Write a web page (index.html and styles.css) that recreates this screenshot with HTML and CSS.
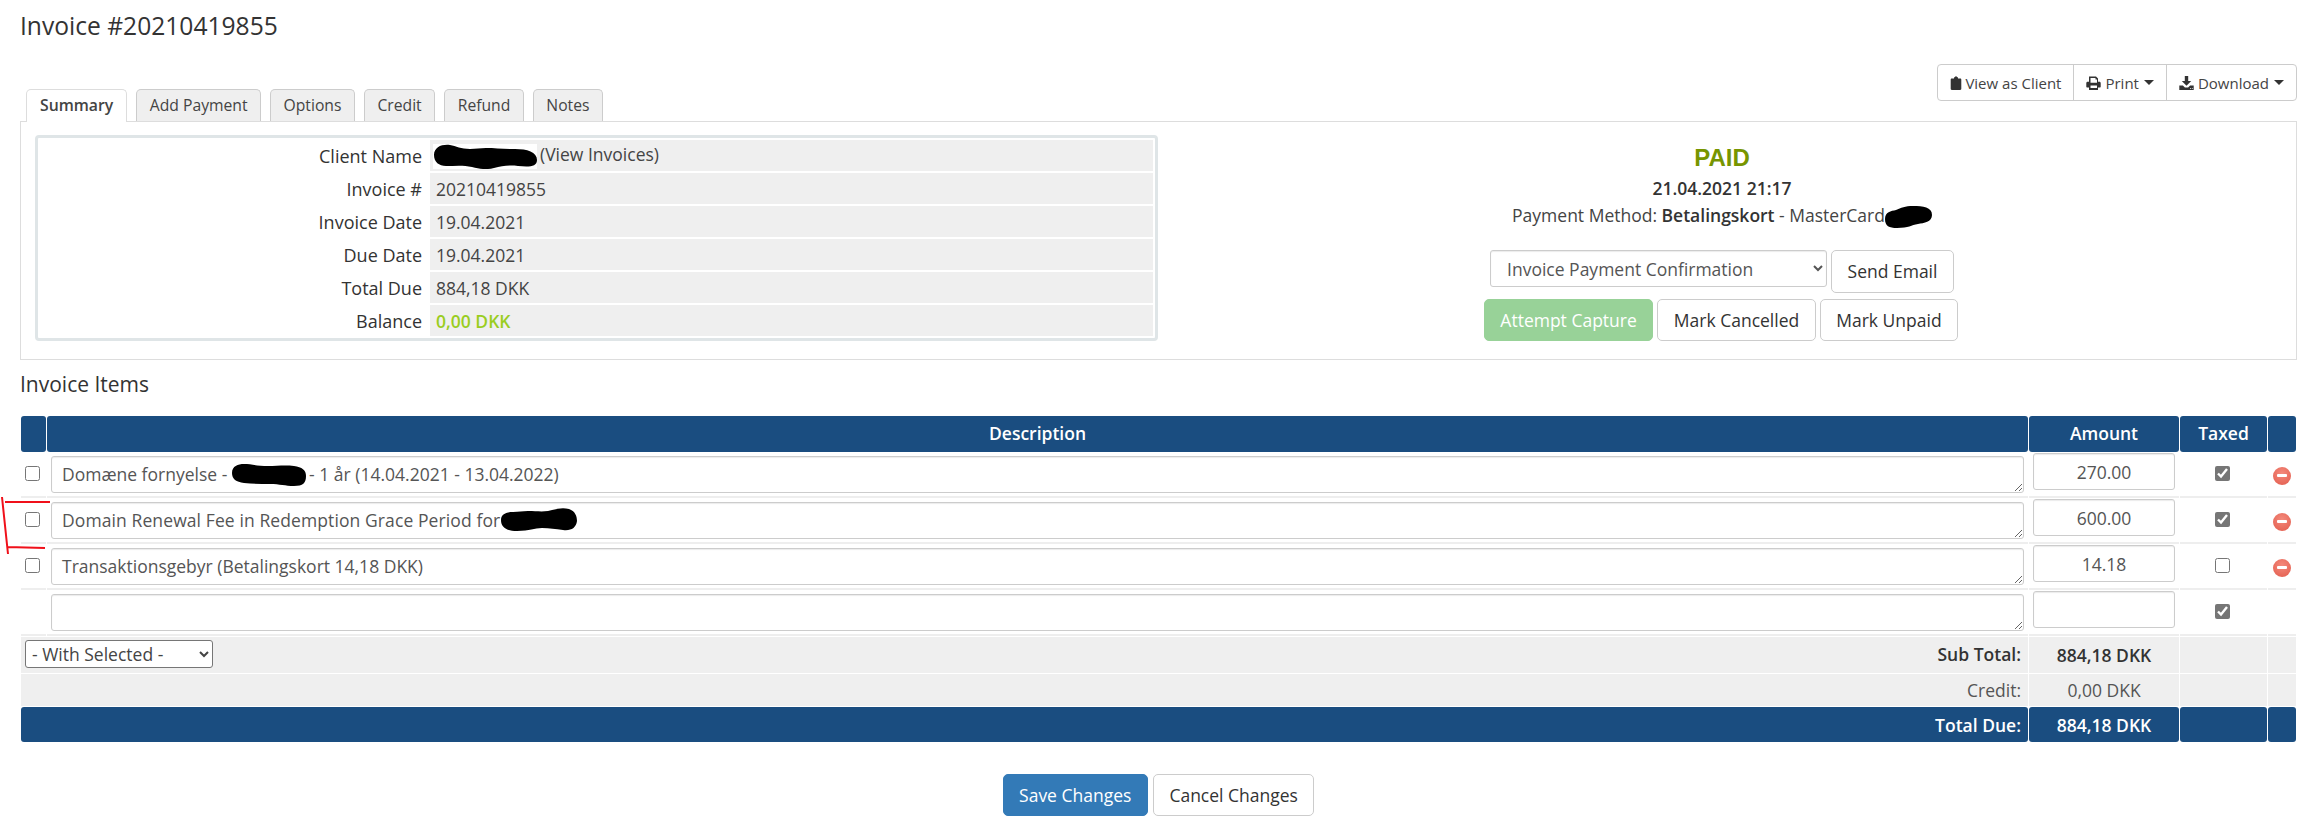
FILE: index.html
```html
<!DOCTYPE html>
<html lang="en">
<head>
<meta charset="utf-8">
<title>Invoice #20210419855</title>
<link rel="stylesheet" href="styles.css">
</head>
<body>
<main class="page">
  <h1 class="title">Invoice #20210419855</h1>

  <div class="toolbar">
    <nav class="tabs">
      <a class="tab active">Summary</a>
      <a class="tab">Add Payment</a>
      <a class="tab">Options</a>
      <a class="tab">Credit</a>
      <a class="tab">Refund</a>
      <a class="tab">Notes</a>
    </nav>
    <div class="btn-group">
      <a class="group-btn">
        <svg class="ico" viewBox="0 0 12 14"><path d="M4 1.200h1a1 1 0 0 1 2 0h1v1.300h2.200c.7 0 1.100.5 1.100 1.100v9.200c0 .6-.4 1.200-1.100 1.200H1.800c-.7 0-1.100-.6-1.100-1.200V3.600c0-.6.4-1.100 1.100-1.100H4z"/></svg>View as Client
      </a>
      <a class="group-btn">
        <svg class="ico ico-wide" viewBox="0 0 15 14"><path fill-rule="evenodd" d="M3 .5h7l2 2v3.300h1.300c.9 0 1.400.6 1.400 1.400v3.600c0 .4-.3.7-.7.7h-2v2.500H3v-2.500H1c-.4 0-.7-.3-.7-.7V7.200c0-.8.5-1.400 1.400-1.400H3zM4.500 2v4.800h6.500V3.500H9.500V2zM4.500 9.500V12h6.500V9.500z"/></svg>Print<i class="caret"></i>
      </a>
      <a class="group-btn">
        <svg class="ico ico-wide" viewBox="0 0 15 14"><path fill-rule="evenodd" d="M5.800 0h3.400v5h3l-4.700 4.700L2.800 5h3zM.3 9.500h3.600l2 2h3.200l2-2h3.600v4.500H.3zM11 12v.8h1V12zM12.800 12v.8h1V12z"/></svg>Download<i class="caret"></i>
      </a>
    </div>
  </div>

  <section class="panel">
    <div class="info-box">
      <table class="info">
        <tr><th>Client Name</th><td><span class="client-name"><svg class="blob blob-client" viewBox="0 0 104 25" preserveAspectRatio="none"><path d="M1 11C1 3 9 0 17 1c6 1 11 4 20 4 6 0 10-1 16-1 9 0 18 1 29 1 12 0 22 3 22 11 0 7-8 7-19 6-9-1-16 0-24 2-8 2-14 1-22-1-9-2-17-1-26-1C6 22 1 18 1 11z"/></svg></span>(View Invoices)</td></tr>
        <tr><th>Invoice #</th><td>20210419855</td></tr>
        <tr><th>Invoice Date</th><td>19.04.2021</td></tr>
        <tr><th>Due Date</th><td>19.04.2021</td></tr>
        <tr><th>Total Due</th><td>884,18 DKK</td></tr>
        <tr><th>Balance</th><td class="balance">0,00 DKK</td></tr>
      </table>
    </div>
    <div class="status">
      <div class="paid">PAID</div>
      <div class="paid-date">21.04.2021 21:17</div>
      <div class="paid-method">Payment Method: <b>Betalingskort</b> - MasterCard<svg class="blob blob-card" viewBox="0 0 47 22" preserveAspectRatio="none"><path d="M0 13C0 6 6 5 11 4c5-2 9-4 17-4 10 0 19 1 19 9 0 7-8 8-14 9-7 1-9 4-21 4C4 22 0 20 0 13z"/></svg></div>
      <div class="action-row row-email">
        <select class="mail-select"><option>Invoice Payment Confirmation</option></select>
        <a class="btn btn-email">Send Email</a>
      </div>
      <div class="action-row row-capture">
        <a class="btn btn-capture">Attempt Capture</a>
        <a class="btn">Mark Cancelled</a>
        <a class="btn">Mark Unpaid</a>
      </div>
    </div>
  </section>

  <h2 class="items-title">Invoice Items</h2>

  <div class="items-wrap">
    <table class="items">
      <colgroup>
        <col class="c-check"><col class="c-desc"><col class="c-amount"><col class="c-tax"><col class="c-del">
      </colgroup>
      <thead>
        <tr><th></th><th>Description</th><th>Amount</th><th>Taxed</th><th></th></tr>
      </thead>
      <tbody>
        <tr class="item">
          <td class="center"><input class="cb" type="checkbox"></td>
          <td class="desc"><textarea class="area">Domæne fornyelse -                  - 1 år (14.04.2021 - 13.04.2022)</textarea>
            <svg class="blob blob-d1" viewBox="0 0 74 22" preserveAspectRatio="none"><path d="M0 9C0 2 6 0 12 0c7 0 14 2 24 2 9 0 17-1 26 0 8 1 12 4 12 10 0 7-3 10-12 10-9 0-14-2-24-2-9 0-17 0-26-1C4 18 0 15 0 9z"/></svg>
          </td>
          <td class="amt"><input class="field" type="text" value="270.00"></td>
          <td class="center"><input class="cb" type="checkbox" checked></td>
          <td class="center"><span class="minus"></span></td>
        </tr>
        <tr class="item">
          <td class="center"><input class="cb" type="checkbox"></td>
          <td class="desc"><textarea class="area area-wide">Domain Renewal Fee in Redemption Grace Period for</textarea>
            <svg class="blob blob-d2" viewBox="0 0 76 23" preserveAspectRatio="none"><path d="M0 12C0 6 5 4 12 4c6 0 9-1 15-1 8 0 13 1 20 0 8-2 14-4 21-2 6 2 8 7 8 12-1 7-6 10-14 9-8-1-13-2-21-2-8 0-12 3-25 3C5 23 0 19 0 12z"/></svg>
          </td>
          <td class="amt"><input class="field" type="text" value="600.00"></td>
          <td class="center"><input class="cb" type="checkbox" checked></td>
          <td class="center"><span class="minus"></span></td>
        </tr>
        <tr class="item">
          <td class="center"><input class="cb" type="checkbox"></td>
          <td class="desc"><textarea class="area">Transaktionsgebyr (Betalingskort 14,18 DKK)</textarea></td>
          <td class="amt"><input class="field" type="text" value="14.18"></td>
          <td class="center"><input class="cb" type="checkbox"></td>
          <td class="center"><span class="minus"></span></td>
        </tr>
        <tr class="item">
          <td></td>
          <td class="desc"><textarea class="area"></textarea></td>
          <td class="amt"><input class="field" type="text"></td>
          <td class="center"><input class="cb" type="checkbox" checked></td>
          <td></td>
        </tr>
      </tbody>
      <tfoot>
        <tr class="sub">
          <td colspan="2"><div class="sub-line"><select class="bulk"><option>- With Selected -</option></select><b>Sub Total:</b></div></td>
          <td class="amt"><b>884,18 DKK</b></td><td></td><td></td>
        </tr>
        <tr class="credit">
          <td colspan="2" class="right">Credit:</td>
          <td class="amt">0,00 DKK</td><td></td><td></td>
        </tr>
        <tr class="total">
          <td colspan="2" class="right">Total Due:</td>
          <td class="amt">884,18 DKK</td><td></td><td></td>
        </tr>
      </tfoot>
    </table>
    <svg class="scribble" viewBox="0 0 52 60"><path d="M5 6H50M2 1L8 58M7 51L45 52"/></svg>
  </div>

  <div class="form-actions">
    <a class="btn btn-lg btn-save">Save Changes</a>
    <a class="btn btn-lg">Cancel Changes</a>
  </div>
</main>
</body>
</html>
```

FILE: styles.css
```css
* { box-sizing: border-box; }

html, body { margin: 0; background: #fff; }

body {
  font-family: "Open Sans", sans-serif;
  font-size: 17.5px;
  color: #333;
}

.page {
  width: 2307px;
  height: 824px;
  padding: 0 10px 0 20px;
  overflow: hidden;
}

.title {
  height: 64px;
  margin: 0;
  padding-top: 9px;
  font-size: 24.6px;
  line-height: 33px;
  font-weight: 400;
  color: #333;
}

.toolbar {
  display: flex;
  justify-content: space-between;
  height: 57px;
}

.tabs {
  display: flex;
  align-items: flex-end;
  gap: 9px;
  padding-left: 6px;
}

.tab {
  position: relative;
  z-index: 1;
  height: 32px;
  padding: 0 12.500px;
  border: 1px solid #ccc;
  border-bottom: 0;
  border-radius: 5px 5px 0 0;
  background: #efefef;
  font-size: 15.700px;
  line-height: 31px;
  color: #444;
}

.tab.active {
  height: 33px;
  margin-bottom: -1px;
  padding: 0 13px;
  border-color: #ddd;
  background: #fff;
  font-size: 15.800px;
  font-weight: 600;
}

.btn-group {
  display: flex;
  height: 37px;
  border: 1px solid #ccc;
  border-radius: 4px;
}

.group-btn {
  display: flex;
  align-items: center;
  padding: 0 12px;
  font-size: 15px;
  color: #444;
  white-space: nowrap;
}

.group-btn + .group-btn { border-left: 1px solid #ccc; }

.ico {
  width: 12px;
  height: 14px;
  margin-right: 3px;
  fill: #333;
}

.ico-wide {
  width: 15px;
  margin-right: 4px;
}

.caret {
  display: inline-block;
  margin-left: 5px;
  border-top: 5px solid #333;
  border-left: 5px solid transparent;
  border-right: 5px solid transparent;
}

.panel {
  display: flex;
  height: 239px;
  padding: 13px 10px 0 14px;
  border: 1px solid #ddd;
}

.info-box {
  width: 1123px;
  height: 206px;
  border: 3px solid #dfe5e7;
  border-radius: 4px;
}

.info {
  width: 100%;
  border-collapse: separate;
  border-spacing: 2px;
  table-layout: fixed;
}

.info th, .info td {
  height: 31px;
  padding: 0 6px;
  font-size: 17.500px;
  font-weight: 400;
  color: #444;
}

.info th {
  width: 388px;
  padding-right: 6px;
  text-align: right;
  font-size: 18px;
  color: #333;
}

.info td { background: #efefef; }

.info .balance {
  font-weight: 600;
  color: #9acd1f;
}

.client-name {
  display: inline-block;
  width: 104px;
  height: 25px;
  margin-left: -3px;
  margin-right: 3px;
  vertical-align: middle;
  background: #fff;
}

.blob { fill: #000; }

.blob-client {
  display: block;
  width: 104px;
  height: 25px;
}

.blob-card {
  width: 47px;
  height: 22px;
  vertical-align: middle;
}

.status {
  flex: 1;
  display: flex;
  flex-direction: column;
  align-items: center;
  color: #333;
}

.paid {
  height: 42px;
  padding-top: 4px;
  font-family: "Liberation Sans", Arial, sans-serif;
  font-size: 24px;
  line-height: 38px;
  font-weight: 700;
  color: #779500;
}

.paid-date {
  height: 25px;
  font-size: 17.500px;
  line-height: 22px;
  font-weight: 600;
}

.paid-method {
  height: 48px;
  font-size: 17.500px;
  line-height: 26px;
  color: #444;
}

.paid-method b { font-weight: 600; color: #333; }

.action-row {
  display: flex;
  align-items: flex-start;
  gap: 4px;
}

.row-email { margin-bottom: 6px; }

.row-capture { margin-right: 2px; }

.mail-select {
  width: 337px;
  height: 37px;
  padding: 0 12px;
  border: 1px solid #ccc;
  border-radius: 3px;
  background: #fff;
  box-shadow: inset 0 1px 1px rgba(0, 0, 0, .08);
  font-family: inherit;
  font-size: 17.500px;
  color: #555;
}

.btn {
  display: inline-block;
  height: 42px;
  padding: 0 15.500px;
  border: 1px solid #ccc;
  border-radius: 5px;
  background: #fff;
  font-size: 17.500px;
  line-height: 40px;
  color: #333;
  white-space: nowrap;
}

.btn-email { height: 43px; }

.btn-capture {
  border-color: #98d298;
  background: #98d298;
  color: #fff;
}

.items-title {
  height: 55px;
  margin: 0;
  padding-top: 10px;
  font-size: 21px;
  line-height: 28px;
  font-weight: 400;
  color: #333;
}

.items-wrap { position: relative; }

.items {
  width: 2277px;
  border-collapse: separate;
  border-spacing: 1px;
  table-layout: fixed;
}

.c-check { width: 25px; }
.c-desc { width: 1981px; }
.c-amount { width: 150px; }
.c-tax { width: 87px; }
.c-del { width: 28px; }

.items thead th {
  height: 36px;
  padding: 0 0 2px;
  border-radius: 3px;
  background: #1a4d80;
  font-size: 17.500px;
  font-weight: 600;
  color: #fff;
}

.item td {
  height: 45px;
  padding: 0;
  border-bottom: 2px solid #eee;
  vertical-align: top;
}

.center { text-align: center; }

.desc { position: relative; padding: 3px 4px 0 4px !important; }

.amt { padding: 3px 4px 0 4px; text-align: center; }

.area {
  display: block;
  width: 100%;
  height: 37px;
  padding: 5px 10px;
  border: 1px solid #ccc;
  border-radius: 3px;
  box-shadow: inset 0 1px 1px rgba(0, 0, 0, .08);
  font-family: inherit;
  font-size: 17.500px;
  line-height: 24px;
  color: #555;
  overflow: hidden;
  white-space: pre;
}

.area-wide { letter-spacing: .1px; }

.field {
  display: block;
  width: 142px;
  height: 37px;
  margin: 0 auto;
  padding: 0 6px;
  border: 1px solid #ccc;
  border-radius: 3px;
  box-shadow: inset 0 1px 1px rgba(0, 0, 0, .08);
  font-family: inherit;
  font-size: 17.500px;
  text-align: center;
  color: #555;
}

.cb {
  width: 15px;
  height: 15px;
  margin: 13px 2px 0 0;
  accent-color: #767676;
}

.minus {
  position: relative;
  display: inline-block;
  width: 18px;
  height: 18px;
  margin-top: 14px;
  border-radius: 50%;
  background: radial-gradient(circle at 50% 35%, #f48a7c, #e25b4c);
}

.minus::after {
  content: "";
  position: absolute;
  top: 7px;
  left: 4px;
  width: 10px;
  height: 3px;
  border-radius: 1px;
  background: #fff;
}

.blob-d1 {
  position: absolute;
  top: 11px;
  left: 185px;
  width: 74px;
  height: 22px;
}

.blob-d2 {
  position: absolute;
  top: 9px;
  left: 454px;
  width: 76px;
  height: 23px;
}

.sub td, .credit td { background: #efefef; padding: 0; }

.sub td { height: 36px; }
.credit td { height: 32px; }

.sub-line {
  display: flex;
  align-items: center;
  justify-content: space-between;
  padding: 0 7px 2px 4px;
}

.sub-line b, .sub .amt b { font-weight: 600; color: #333; }

.sub .amt, .credit .amt, .total .amt { padding: 0; }

.right { text-align: right; padding-right: 7px !important; }

.credit td { color: #555; }

.bulk {
  width: 188px;
  height: 28px;
  padding: 0 2px;
  border: 1px solid #767676;
  border-radius: 3px;
  background: #fff;
  font-family: inherit;
  font-size: 17.500px;
  color: #444;
}

.total td {
  height: 35px;
  padding: 0;
  border-radius: 3px;
  background: #1a4d80;
  font-weight: 600;
  color: #fff;
}

.scribble {
  position: absolute;
  top: 81px;
  left: -20px;
  width: 52px;
  height: 60px;
  fill: none;
  stroke: #f0101a;
  stroke-width: 2;
}

.form-actions {
  display: flex;
  justify-content: center;
  gap: 5px;
  margin-top: 31px;
}

.btn-save {
  border-color: #337ab7;
  background: #337ab7;
  color: #fff;
}
```
